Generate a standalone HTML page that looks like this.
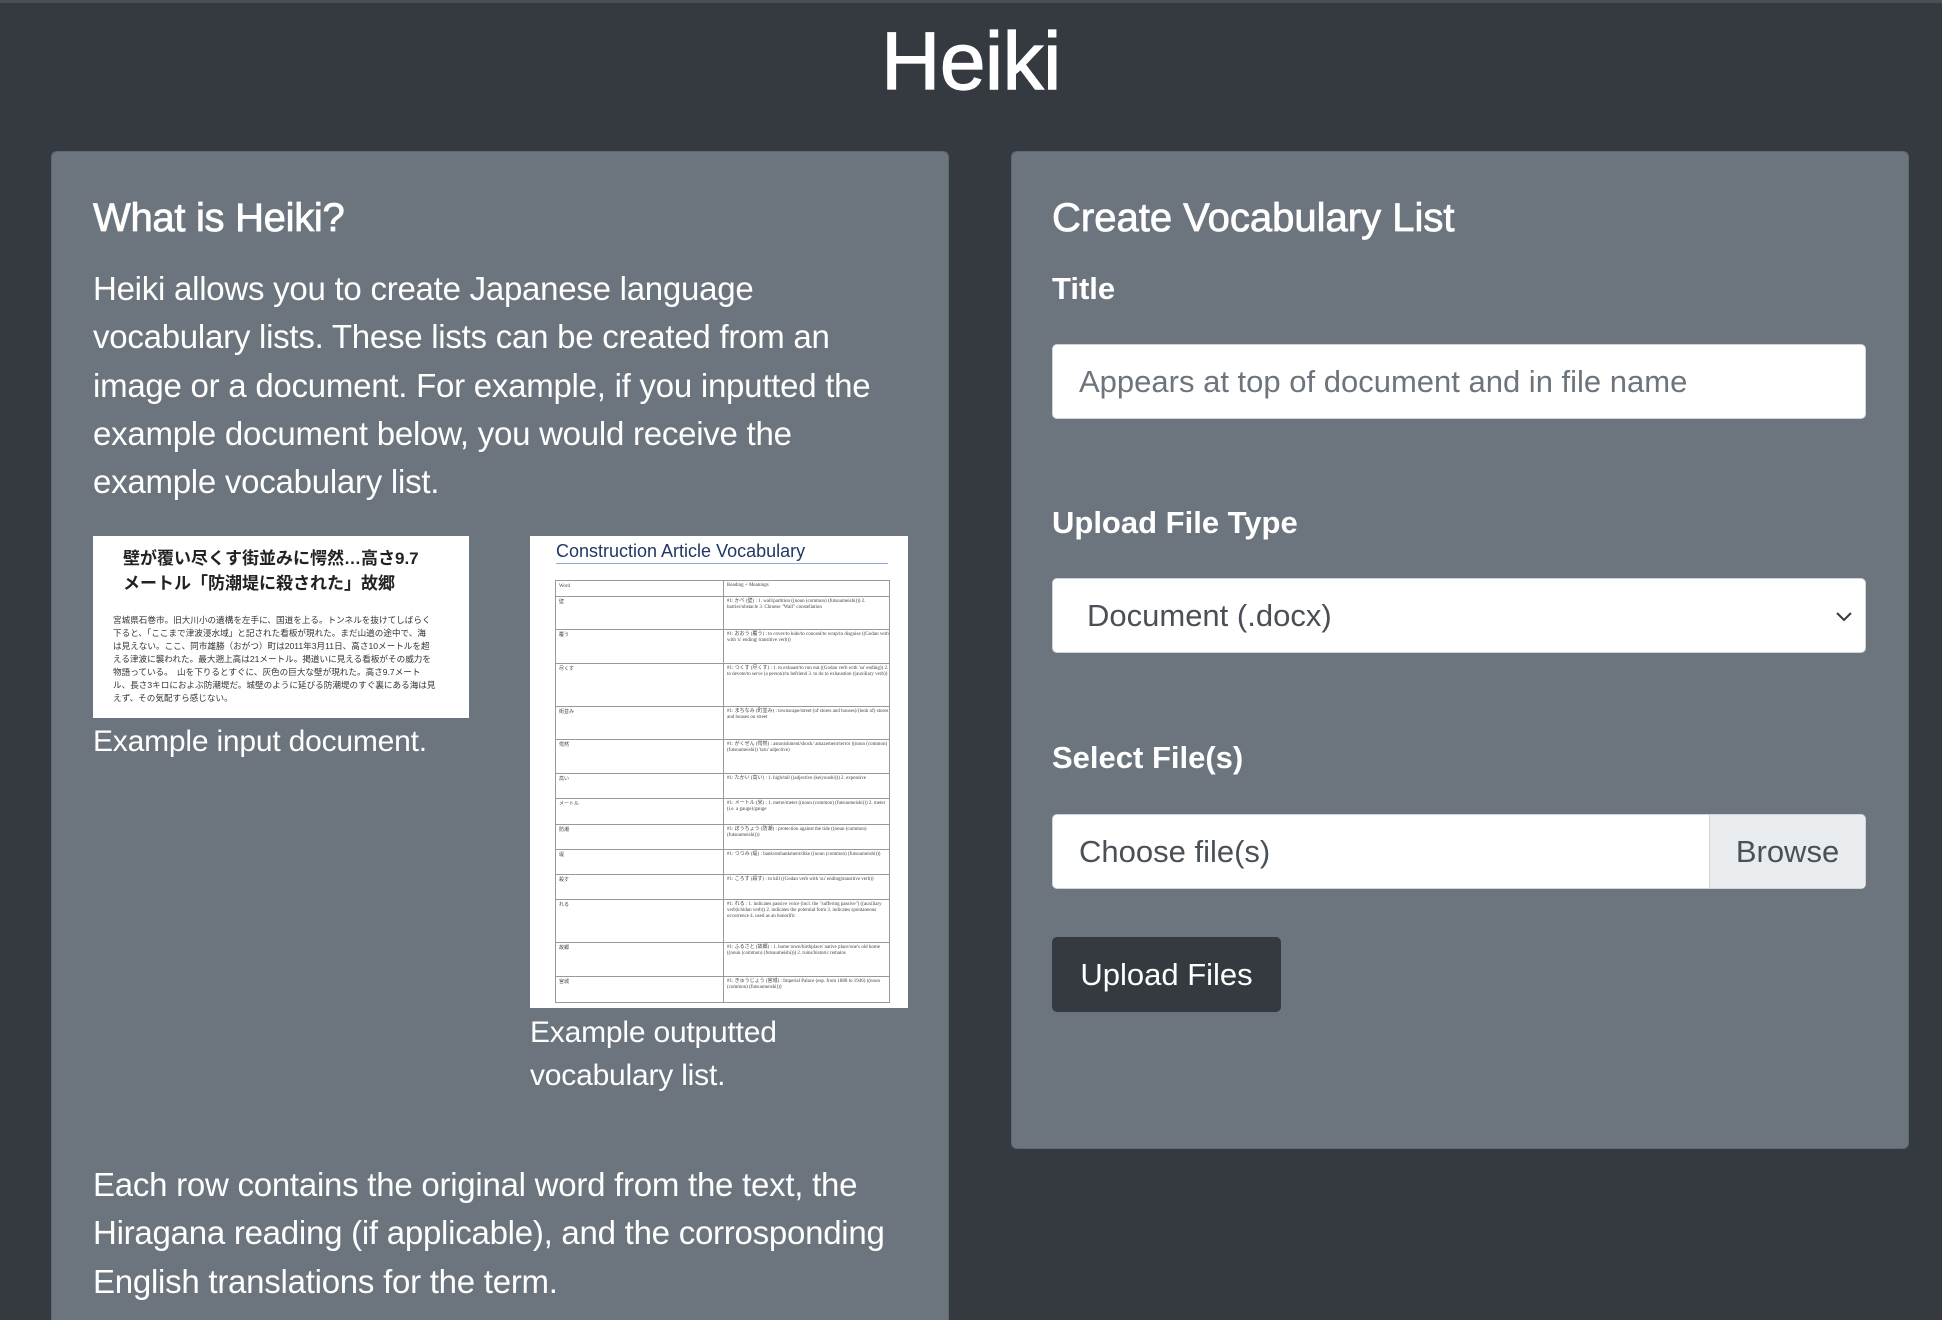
<!DOCTYPE html>
<html><head><meta charset="utf-8"><style>
*{box-sizing:border-box;margin:0;padding:0}
html,body{width:1942px;height:1320px;overflow:hidden}
body{background:#343a40;font-family:"Liberation Sans","Noto Sans CJK JP",sans-serif;color:#fff;position:relative}
.topline{position:absolute;left:0;top:0;width:1942px;height:3px;background:#4a4f55}
h1{position:absolute;left:0;width:1942px;text-align:center;top:12px;font-size:82px;font-weight:400;letter-spacing:-0.5px;line-height:100px;-webkit-text-stroke:1.2px #fff}
.card{position:absolute;background:#6c757d;border:1px solid #5f676f;border-radius:6px}
.abs{position:absolute;white-space:nowrap}
.h2{font-size:40px;line-height:48px;letter-spacing:-0.3px;-webkit-text-stroke:0.8px #fff}
.p{font-size:33px;line-height:48px;letter-spacing:-0.25px}
.lbl{font-size:31px;font-weight:700;line-height:40px}
.field{position:absolute;left:1052px;width:814px;height:75px;background:#fff;border:1px solid #ced4da;border-radius:5px;color:#495057;font-size:31px;line-height:73px}
.doc{position:absolute;background:#fff;color:#222}
.tbl{position:absolute;left:555px;top:580px;width:335px;border:1px solid #999;border-bottom:none}
.tbl div.r{border-bottom:1px solid #999;position:relative;font-size:5px;line-height:6px;color:#444;font-family:"Liberation Serif","Noto Sans CJK JP",serif;overflow:hidden}
.tbl .c1{position:absolute;left:3px;top:3px}
.tbl .c2{position:absolute;left:171px;top:2px;width:162px;white-space:normal}
.tbl .v{position:absolute;left:167px;top:0;bottom:0;border-left:1px solid #999}
</style></head><body>
<div class="topline"></div>
<h1>Heiki</h1>

<div class="card" style="left:51px;top:151px;width:898px;height:1180px"></div>
<div class="abs h2" style="left:93px;top:194px">What is Heiki?</div>
<div class="abs p" style="left:93px;top:265px;line-height:48.3px">Heiki allows you to create Japanese language<br>vocabulary lists. These lists can be created from an<br>image or a document. For example, if you inputted the<br>example document below, you would receive the<br>example vocabulary list.</div>

<div class="doc" style="left:93px;top:536px;width:376px;height:182px">
 <div class="abs" style="left:30px;top:10px;font-size:17px;font-weight:700;line-height:25px">壁が覆い尽くす街並みに愕然…高さ9.7<br>メートル「防潮堤に殺された」故郷</div>
 <div class="abs" style="left:20px;top:78px;font-size:8.6px;line-height:13px;color:#333">宮城県石巻市。旧大川小の遺構を左手に、国道を上る。トンネルを抜けてしばらく<br>下ると、「ここまで津波浸水域」と記された看板が現れた。まだ山道の途中で、海<br>は見えない。ここ、同市雄勝（おがつ）町は2011年3月11日、高さ10メートルを超<br>える津波に襲われた。最大遡上高は21メートル。掲道いに見える看板がその威力を<br>物語っている。　山を下りるとすぐに、灰色の巨大な壁が現れた。高さ9.7メート<br>ル、長さ3キロにおよぶ防潮堤だ。城壁のように延びる防潮堤のすぐ裏にある海は見<br>えず、その気配すら感じない。</div>
</div>
<div class="abs" style="left:93px;top:722px;font-size:30px;line-height:40px;letter-spacing:-0.2px">Example input document.</div>

<div class="doc" style="left:530px;top:536px;width:378px;height:472px">
 <div class="abs" style="left:26px;top:4px;font-size:18px;color:#1f3864;line-height:22px">Construction Article Vocabulary</div>
 <div class="abs" style="left:26px;top:27px;width:332px;height:1px;background:#8eaadb"></div>
</div>
<div class="tbl">
 <div class="r" style="height:16px"><span class="c1">Word</span><span class="v"></span><span class="c2">Reading + Meanings</span></div>
 <div class="r" style="height:33px"><span class="c1">壁</span><span class="v"></span><span class="c2">#1: かべ (壁) : 1. wall/partition ((noun (common) (futsuumeishi))) 2. barrier/obstacle 3. Chinese "Wall" constellation</span></div>
 <div class="r" style="height:34px"><span class="c1">覆う</span><span class="v"></span><span class="c2">#1: おおう (覆う) : to cover/to hide/to conceal/to wrap/to disguise ((Godan verb with 'u' ending| transitive verb))</span></div>
 <div class="r" style="height:43px"><span class="c1">尽くす</span><span class="v"></span><span class="c2">#1: つくす (尽くす) : 1. to exhaust/to run out ((Godan verb with 'su' ending)) 2. to devote/to serve (a person)/to befriend 3. to do to exhaustion ((auxiliary verb))</span></div>
 <div class="r" style="height:33px"><span class="c1">街並み</span><span class="v"></span><span class="c2">#1: まちなみ (町並み) : townscape/street (of stores and houses)/(look of) stores and houses on street</span></div>
 <div class="r" style="height:34px"><span class="c1">愕然</span><span class="v"></span><span class="c2">#1: がくぜん (愕然) : astonishment/shock/ amazement/terror ((noun (common) (futsuumeishi)) 'taru' adjective)</span></div>
 <div class="r" style="height:25px"><span class="c1">高い</span><span class="v"></span><span class="c2">#1: たかい (高い) : 1. high/tall ((adjective (keiyoushi))) 2. expensive</span></div>
 <div class="r" style="height:26px"><span class="c1">メートル</span><span class="v"></span><span class="c2">#1: メートル (米) : 1. metre/meter ((noun (common) (futsuumeishi))) 2. meter (i.e. a gauge)/gauge</span></div>
 <div class="r" style="height:25px"><span class="c1">防潮</span><span class="v"></span><span class="c2">#1: ぼうちょう (防潮) : protection against the tide ((noun (common) (futsuumeishi)))</span></div>
 <div class="r" style="height:25px"><span class="c1">堤</span><span class="v"></span><span class="c2">#1: つつみ (堤) : bank/embankment/dike ((noun (common) (futsuumeishi)))</span></div>
 <div class="r" style="height:25px"><span class="c1">殺す</span><span class="v"></span><span class="c2">#1: ころす (殺す) : to kill ((Godan verb with 'su' ending|transitive verb))</span></div>
 <div class="r" style="height:43px"><span class="c1">れる</span><span class="v"></span><span class="c2">#1: れる : 1. indicates passive voice (incl. the "suffering passive") ((auxiliary verb|ichidan verb)) 2. indicates the potential form 3. indicates spontaneous occurrence 4. used as an honorific</span></div>
 <div class="r" style="height:34px"><span class="c1">故郷</span><span class="v"></span><span class="c2">#1: ふるさと (故郷) : 1. home town/birthplace/ native place/one's old home ((noun (common) (futsuumeishi))) 2. ruins/historic remains</span></div>
 <div class="r" style="height:26px"><span class="c1">宮城</span><span class="v"></span><span class="c2">#1: きゅうじょう (宮城) : Imperial Palace (esp. from 1888 to 1946) ((noun (common) (futsuumeishi)))</span></div>
</div>
<div class="abs" style="left:530px;top:1011px;font-size:30px;line-height:43px;letter-spacing:-0.2px">Example outputted<br>vocabulary list.</div>

<div class="abs p" style="left:93px;top:1161px;line-height:48.3px">Each row contains the original word from the text, the<br>Hiragana reading (if applicable), and the corrosponding<br>English translations for the term.</div>

<div class="card" style="left:1011px;top:151px;width:898px;height:998px"></div>
<div class="abs h2" style="left:1052px;top:194px;letter-spacing:0">Create Vocabulary List</div>
<div class="abs lbl" style="left:1052px;top:269px">Title</div>
<div class="field" style="top:344px;padding-left:26px;color:#6c757d">Appears at top of document and in file name</div>
<div class="abs lbl" style="left:1052px;top:503px">Upload File Type</div>
<div class="field" style="top:578px;padding-left:34px">Document (.docx)
 <svg style="position:absolute;right:12px;top:31px" width="18" height="12" viewBox="0 0 18 12"><path d="M2 3l7 7 7-7" fill="none" stroke="#343a40" stroke-width="2"/></svg></div>
<div class="abs lbl" style="left:1052px;top:738px">Select File(s)</div>
<div class="field" style="top:814px;padding-left:26px">Choose file(s)
 <div style="position:absolute;left:656px;top:0;right:0;height:73px;background:#e9ecef;border-left:1px solid #ced4da;text-align:center;line-height:73px;border-radius:0 5px 5px 0">Browse</div></div>
<div class="abs" style="left:1052px;top:937px;width:229px;height:75px;background:#343a40;border-radius:5px;font-size:31px;line-height:75px;text-align:center">Upload Files</div>
</body></html>
